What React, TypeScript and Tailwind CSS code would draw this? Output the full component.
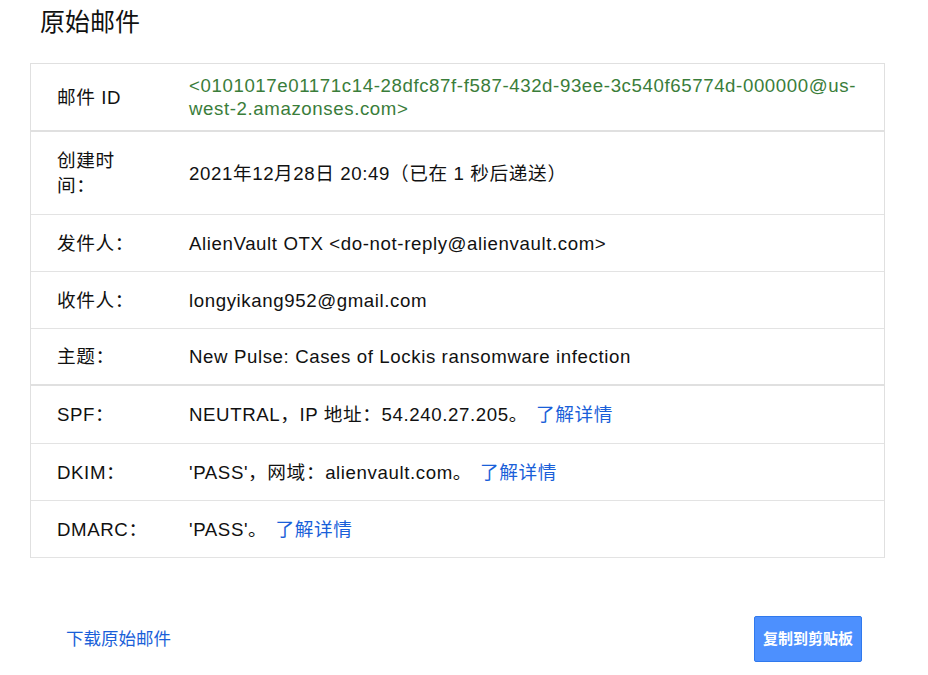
import React from "react";

const font = { fontFamily: '"Liberation Sans", Arial, "Noto Sans CJK SC", sans-serif' };

function Row({
  label,
  children,
  h,
  thick,
  labelClass = "",
}: {
  label: React.ReactNode;
  children: React.ReactNode;
  h: string;
  thick?: boolean;
  labelClass?: string;
}) {
  return (
    <div className={`flex items-center ${h} ${thick ? "border-b-2 border-[#e0e0e0]" : "border-b border-[#e3e3e3]"}`}>
      <div className={`w-[90px] ml-[26px] shrink-0 leading-[23px] ${labelClass}`}>{label}</div>
      <div className="ml-[42px] pr-[18px] flex-1 leading-[23px]">{children}</div>
    </div>
  );
}

const Link = ({ children }: { children: React.ReactNode }) => (
  <span className="text-[#1a5fd9] ml-[8px]">{children}</span>
);

export default function App() {
  return (
    <div className="w-[928px] h-[675px] bg-white text-[18.67px] tracking-[0.6px] text-[#111] relative" style={font}>
      <div className="pl-[40px] pt-[6px] text-[25px] leading-[32px] tracking-normal text-[#111]">原始邮件</div>
      <div className="mx-[30px] mt-[25px] w-[855px] border border-[#e0e0e0] border-b-0">
        <Row label={<span className="whitespace-nowrap">邮件 ID</span>} h="h-[68px]" thick>
          <span className="text-[#3a7d3a]">
            &lt;0101017e01171c14-28dfc87f-f587-432d-93ee-3c540f65774d-000000@us-west-2.amazonses.com&gt;
          </span>
        </Row>
        <Row label="创建时间：" h="h-[83px]" labelClass="leading-[25px]">
          2021年12月28日 20:49（已在 1 秒后递送）
        </Row>
        <Row label="发件人：" h="h-[57px]">
          AlienVault OTX &lt;do-not-reply@alienvault.com&gt;
        </Row>
        <Row label="收件人：" h="h-[57px]">
          longyikang952@gmail.com
        </Row>
        <Row label="主题：" h="h-[57px]" thick>
          New Pulse: Cases of Lockis ransomware infection
        </Row>
        <Row label="SPF：" h="h-[58px]">
          NEUTRAL，IP 地址：54.240.27.205。<Link>了解详情</Link>
        </Row>
        <Row label="DKIM：" h="h-[57px]">
          'PASS'，网域：alienvault.com。<Link>了解详情</Link>
        </Row>
        <Row label="DMARC：" h="h-[57px]">
          'PASS'。<Link>了解详情</Link>
        </Row>
      </div>
      <div className="mx-[30px] mt-[58px] flex items-center justify-between w-[832px]">
        <span className="ml-[36px] text-[17.5px] tracking-normal text-[#1a5fd9]">下载原始邮件</span>
        <button className="w-[108px] h-[46px] bg-[#4d90fe] border border-[#3079ed] rounded-[2px] text-white font-bold text-[15px] tracking-normal">
          复制到剪贴板
        </button>
      </div>
    </div>
  );
}
